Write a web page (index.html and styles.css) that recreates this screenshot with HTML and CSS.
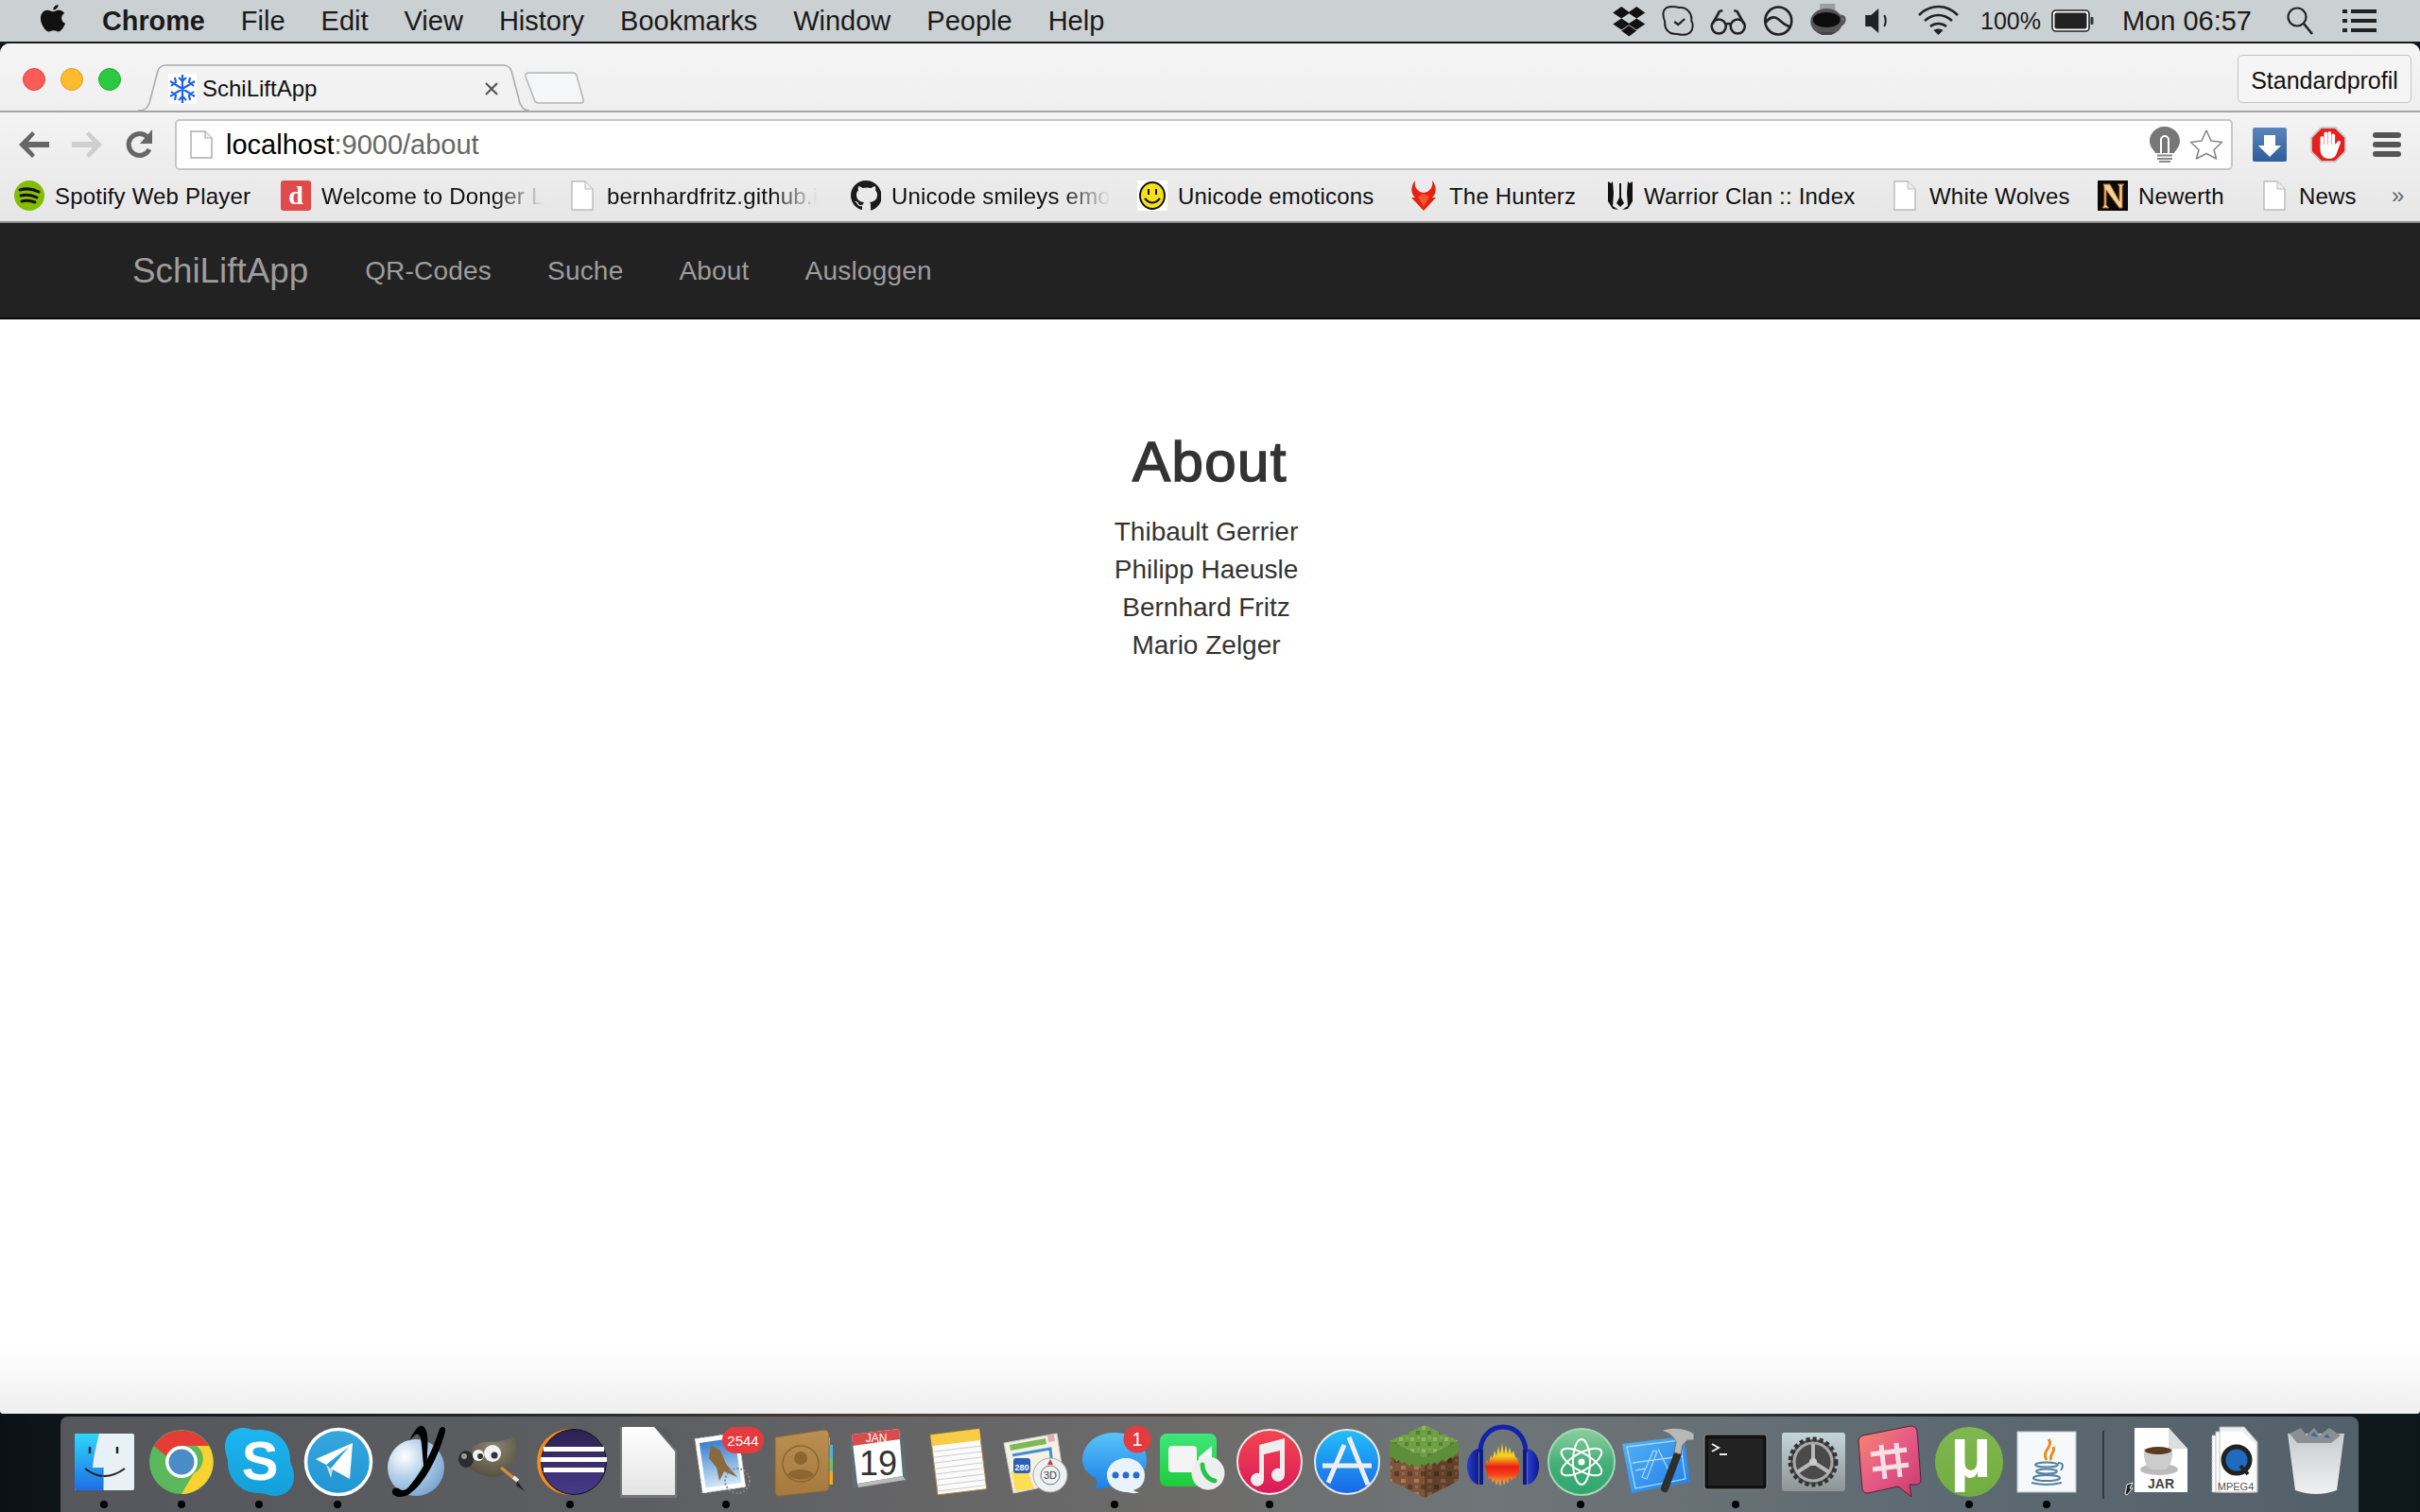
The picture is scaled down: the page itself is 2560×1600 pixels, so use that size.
FILE: index.html
```html
<!DOCTYPE html>
<html lang="en">
<head>
<meta charset="utf-8">
<title>SchiLiftApp</title>
<link rel="stylesheet" href="styles.css">
</head>
<body>
<svg class="defs" aria-hidden="true"><defs>
<linearGradient id="gFinder" x1="0" y1="0" x2="0" y2="1"><stop offset="0" stop-color="#2fd6fc"/><stop offset="1" stop-color="#1d6fe6"/></linearGradient>
<linearGradient id="gSky" x1="0" y1="0" x2="0" y2="1"><stop offset="0" stop-color="#1db6f2"/><stop offset="1" stop-color="#159fd6"/></linearGradient>
<linearGradient id="gTele" x1="0" y1="0" x2="0" y2="1"><stop offset="0" stop-color="#37a6de"/><stop offset="1" stop-color="#1f96d2"/></linearGradient>
<radialGradient id="gVym" cx=".3" cy=".3" r=".85"><stop offset="0" stop-color="#fff"/><stop offset=".45" stop-color="#b4cfea"/><stop offset="1" stop-color="#6f9ecb"/></radialGradient>
<radialGradient id="gGimp" cx=".5" cy=".3" r=".8"><stop offset="0" stop-color="#8c8570"/><stop offset="1" stop-color="#4f4a3c"/></radialGradient>
<linearGradient id="gEclipse" x1="0" y1="0" x2="0" y2="1"><stop offset="0" stop-color="#2c2150"/><stop offset="1" stop-color="#473a8c"/></linearGradient>
<linearGradient id="gDoc" x1="0" y1="0" x2="0" y2="1"><stop offset="0" stop-color="#fff"/><stop offset="1" stop-color="#e4e4e4"/></linearGradient>
<linearGradient id="gMail" x1="0" y1="0" x2="0" y2="1"><stop offset="0" stop-color="#3a7fd0"/><stop offset="1" stop-color="#cfe6f6"/></linearGradient>
<linearGradient id="gBook" x1="0" y1="0" x2="0" y2="1"><stop offset="0" stop-color="#b98f52"/><stop offset="1" stop-color="#a67a3e"/></linearGradient>
<linearGradient id="gMsg" x1="0" y1="0" x2="0" y2="1"><stop offset="0" stop-color="#5ac4fa"/><stop offset="1" stop-color="#1a7fe6"/></linearGradient>
<linearGradient id="gFace" x1="0" y1="0" x2="0" y2="1"><stop offset="0" stop-color="#3fe67c"/><stop offset="1" stop-color="#1fcc3a"/></linearGradient>
<linearGradient id="gTunes" x1="0" y1="0" x2="0" y2="1"><stop offset="0" stop-color="#f6454f"/><stop offset="1" stop-color="#d91a5a"/></linearGradient>
<linearGradient id="gStore" x1="0" y1="0" x2="0" y2="1"><stop offset="0" stop-color="#22c0fa"/><stop offset="1" stop-color="#1a66e6"/></linearGradient>
<linearGradient id="gAud" x1="0" y1="0" x2="0" y2="1"><stop offset="0" stop-color="#e8c83a"/><stop offset=".3" stop-color="#f4d21e"/><stop offset=".55" stop-color="#ee1c14"/><stop offset=".72" stop-color="#f4421a"/><stop offset="1" stop-color="#e8cf4a"/></linearGradient>
<linearGradient id="gAudB" x1="0" y1="0" x2="1" y2="0"><stop offset="0" stop-color="#2a3cd0"/><stop offset="1" stop-color="#0c1a8a"/></linearGradient>
<linearGradient id="gAtom" x1="0" y1="0" x2="0" y2="1"><stop offset="0" stop-color="#8ccf9f"/><stop offset=".55" stop-color="#44ad78"/><stop offset="1" stop-color="#2fa670"/></linearGradient>
<linearGradient id="gXcode" x1="0" y1="0" x2="1" y2="1"><stop offset="0" stop-color="#55b4f5"/><stop offset="1" stop-color="#1f7de8"/></linearGradient>
<linearGradient id="gPref" x1="0" y1="0" x2="0" y2="1"><stop offset="0" stop-color="#c4d6dc"/><stop offset="1" stop-color="#8f9496"/></linearGradient>
<linearGradient id="gPink" x1="0" y1="0" x2="1" y2="1"><stop offset="0" stop-color="#f58a6e"/><stop offset=".5" stop-color="#e65a86"/><stop offset="1" stop-color="#c73b6d"/></linearGradient>
<linearGradient id="gTrash" x1="0" y1="0" x2="0" y2="1"><stop offset="0" stop-color="#c8cccf"/><stop offset="1" stop-color="#f0f0f0"/></linearGradient>
<linearGradient id="gGrn" x1="0" y1="0" x2="0" y2="1"><stop offset="0" stop-color="#7fb84e"/><stop offset="1" stop-color="#72ad42"/></linearGradient>
<linearGradient id="gDown" x1="0" y1="0" x2="0" y2="1"><stop offset="0" stop-color="#5b86bb"/><stop offset="1" stop-color="#2f5c9b"/></linearGradient>
<pattern id="pGrass" width="12" height="12" patternUnits="userSpaceOnUse"><rect width="12" height="12" fill="#6f9f45"/><rect width="4" height="4" x="1" y="2" fill="#8cb860"/><rect width="4" height="4" x="7" y="7" fill="#557f35"/><rect width="3" height="3" x="8" y="1" fill="#7eaa52"/></pattern>
<pattern id="pDirtL" width="14" height="14" patternUnits="userSpaceOnUse"><rect width="14" height="14" fill="#7d5438"/><rect width="5" height="4" x="1" y="2" fill="#a87b56"/><rect width="5" height="5" x="8" y="8" fill="#5d3c27"/><rect width="3" height="3" x="2" y="9" fill="#92684a"/></pattern>
<pattern id="pDirtR" width="14" height="14" patternUnits="userSpaceOnUse"><rect width="14" height="14" fill="#61402a"/><rect width="5" height="4" x="1" y="2" fill="#83593c"/><rect width="5" height="5" x="8" y="8" fill="#472d1c"/><rect width="3" height="3" x="2" y="9" fill="#72503a"/></pattern>
</defs></svg>

<header class="menubar">
  <div class="menu-left">
    <svg class="apple" viewBox="0 0 30 34"><path fill="#111" d="M21 1c.2 3-2.600 6-5.600 5.800C15 4 18 1.200 21 1zM15.500 8.600c1.400 0 3.300-1.700 6-1.500 1.400 0 4.600.5 6.500 3.400-4.800 3-4 9.500 1 11.600-1.300 3.400-4.500 9.400-7.800 9.400-2 0-3-1.300-5.400-1.300s-3.500 1.300-5.400 1.300C6.600 31.500 1 23 1 16.500c0-6 4-9.300 7.500-9.400 2.800 0 4.800 1.500 7 1.500z"/></svg>
    <span class="menu-item menu-strong">Chrome</span>
    <span class="menu-item">File</span>
    <span class="menu-item">Edit</span>
    <span class="menu-item">View</span>
    <span class="menu-item">History</span>
    <span class="menu-item">Bookmarks</span>
    <span class="menu-item">Window</span>
    <span class="menu-item">People</span>
    <span class="menu-item">Help</span>
  </div>
  <div class="menu-right">
    <svg class="mi" viewBox="0 0 52 44"><path fill="#111" d="M18 7l9 6.500-9 6-9-6zM34 7l9 6.500-9 6-9-6zM18 19.500l9 6-9 6-9-6zM34 19.500l9 6-9 6-9-6zM26 27l8 5.500-8 6-8-6z"/></svg>
    <svg class="mi" viewBox="0 0 52 44"><path fill="none" stroke="#222" stroke-width="2" d="M13 8c5-2 9-1 13 0 8-1 14 6 13 14 2 3 2 9-1 12-4 4-10 3-14 2-8 1-14-5-13-13-2-5-3-12 2-15z"/><path fill="none" stroke="#222" stroke-width="2.200" d="M21 23l4 3 7-6"/></svg>
    <svg class="mi" viewBox="0 0 52 44"><g fill="none" stroke="#222" stroke-width="2.600"><circle cx="16" cy="28" r="7.500"/><circle cx="36" cy="28" r="7.500"/><path d="M23 26q3-2 6 0M9.500 25L17 11.500M42.500 25L35 11.500M17 11.500h3M35 11.500h-3"/></g></svg>
    <svg class="mi" viewBox="0 0 52 44"><g fill="none" stroke="#222" stroke-width="2.600"><ellipse cx="26" cy="22" rx="14" ry="14.500"/><path d="M12.500 24c4-6 9-7 13-4s8 8 13 8"/></g></svg>
    <svg class="mi" viewBox="0 0 52 44"><path fill="#777" opacity=".55" d="M18 4h16v7H18z"/><ellipse cx="25" cy="23" rx="17" ry="14" fill="#555"/><path fill="none" stroke="#555" stroke-width="3" d="M40 17c6 0 5 9-3 10"/><ellipse cx="25" cy="21" rx="14.500" ry="8" fill="#0c0c0c"/><path fill="#444" d="M15 34h20l-5 3H20z"/></svg>
    <svg class="mi" viewBox="0 0 52 44"><path fill="#1c2226" d="M13 16h6l8-7v26l-8-7h-6z"/><path fill="none" stroke="#1c2226" stroke-width="2" d="M33 16q3 6 0 12"/></svg>
    <svg class="mi-w" viewBox="0 0 77 44"><g fill="none" stroke="#222" stroke-width="2.600"><path d="M18 16c12-12 29-12 41 0M24 22c9-8 20-8 29 0M30 28c5-4 12-4 17 0"/></g><path fill="#222" d="M38.500 37l-5-5c3-2 7-2 10 0z"/></svg>
    <span class="menu-pct">100%</span>
    <svg class="batt" viewBox="0 0 46 28"><rect x="1" y="3" width="39" height="22" rx="4" fill="#fff" stroke="#222" stroke-width="1.600"/><rect x="3.500" y="5.500" width="34" height="17" rx="2" fill="#222"/><rect x="41.500" y="10" width="3" height="8" rx="1" fill="#333"/></svg>
    <span class="menu-clock">Mon 06:57</span>
    <svg class="msearch" viewBox="0 0 30 32"><circle cx="12" cy="12" r="9.500" fill="none" stroke="#222" stroke-width="2.200"/><path d="M19 19l9 11" stroke="#222" stroke-width="2.600"/></svg>
    <svg class="mlist" viewBox="0 0 36 26"><path fill="#222" d="M0 1h5v4H0zM9 1h27v4H9zM0 11h5v4H0zM9 11h27v4H9zM0 21h5v4H0zM9 21h27v4H9z"/></svg>
  </div>
</header>

<main class="window">
  <div class="tabstrip">
    <div class="lights"><i class="light red"></i><i class="light amber"></i><i class="light green"></i></div>
    <div class="tab">
      <svg class="tab-shape" viewBox="0 0 414 50" preserveAspectRatio="none"><path fill="#f2f2f2" stroke="#a9a9a9" stroke-width="1.500" d="M0 49c7 0 10-2 12-8l9-34q2-6 9-6h356q7 0 9 6l9 34c2 6 6 8 10 8"/></svg>
      <svg class="favicon" viewBox="0 0 30 32"><rect width="30" height="32" fill="#fff"/><g stroke="#1f63e6" stroke-width="2.200" fill="none"><path d="M15 1v30M2 8l26 16M28 8L2 24M11 4l4 4 4-4M11 28l4-4 4 4M3 13l5-4-1-5M27 13l-5-4 1-5M3 19l5 4-1 5M27 19l-5 4 1 5"/></g></svg>
      <span class="tab-title">SchiLiftApp</span>
      <svg class="tab-close" viewBox="0 0 16 16"><path d="M2 2l12 12M14 2L2 14" stroke="#555" stroke-width="2.200"/></svg>
    </div>
    <svg class="newtab" viewBox="0 0 64 34"><path fill="#f4f6f7" stroke="#b4b4b4" stroke-width="1.500" d="M6 1h46q3 0 4 3l7 25q1 4-3 4H16q-4 0-5-4L2 5q-1-4 4-4z"/></svg>
    <div class="profile">Standardprofil</div>
  </div>

  <div class="chrome-lower">
    <div class="toolbar">
      <svg class="tool" viewBox="0 0 40 40"><path fill="#666" d="M4 20L18 6l3 3-7 8h22v6H14l7 8-3 3z"/></svg>
      <svg class="tool" viewBox="0 0 40 40"><path fill="#cfcfcf" d="M36 20L22 6l-3 3 7 8H4v6h22l-7 8 3 3z"/></svg>
      <svg class="tool" viewBox="0 0 40 40"><path fill="none" stroke="#666" stroke-width="5" d="M30 25a11.500 11.500 0 1 1-2-13"/><path fill="#666" d="M33 4v15H20z"/></svg>
      <div class="omnibox">
        <svg class="omni-file" viewBox="0 0 24 30"><path fill="#fff" stroke="#aaa" stroke-width="1.400" d="M1 1h15l7 7v21H1z"/><path fill="#eee" stroke="#aaa" stroke-width="1.200" d="M16 1v7h7"/></svg>
        <span class="omni-url"><span class="omni-host">localhost</span>:9000/about</span>
        <svg class="omni-bulb" viewBox="0 0 32 38"><path fill="#777" d="M16 0c9 0 16 7 16 15 0 7-5 10-6 13H6C5 25 0 22 0 15 0 7 7 0 16 0z"/><path fill="none" stroke="#fff" stroke-width="2" d="M12 28V14a4 4 0 0 1 8 0v14"/><path fill="#888" d="M8 29.500h16v2H8zM8 33h16v2H8zM10 36h12v2H10z"/></svg>
        <svg class="omni-star" viewBox="0 0 36 34"><path fill="#fff" stroke="#888" stroke-width="1.600" stroke-linejoin="round" d="M18 2l5 11 11.500 1.500-8.500 8 2.500 9.500-10.500-5.500L7.500 32 10 22.500l-8.500-8L13 13z"/></svg>
      </div>
      <svg class="ext ext-first" viewBox="0 0 40 40"><rect x="2" y="2" width="36" height="36" rx="2" fill="url(#gDown)"/><path fill="#fff" d="M14 10h12v11h6L20 33 8 21h6z"/></svg>
      <svg class="ext" viewBox="0 0 40 40"><path fill="#e4211f" stroke="#c8c8c8" stroke-width="1.800" d="M12.500 2h15L38 12.500v15L27.500 38h-15L2 27.500v-15z"/><g fill="#fff"><rect x="11.500" y="11" width="3.600" height="14" rx="1.800"/><rect x="15.500" y="6.500" width="3.600" height="16" rx="1.800"/><rect x="19.500" y="6" width="3.600" height="16" rx="1.800"/><rect x="23.500" y="8.500" width="3.600" height="14" rx="1.800"/><path d="M11.500 20h15.600l3.500-4c2-.5 3 1 2 3l-3 8c-1 5-4 8-9 8s-9-4-9-9z"/></g></svg>
      <svg class="ext" viewBox="0 0 40 40"><g fill="#555"><rect x="5" y="7" width="30" height="6" rx="3"/><rect x="5" y="17" width="30" height="6" rx="3"/><rect x="5" y="27" width="30" height="6" rx="3"/></g></svg>
    </div>
    <div class="bookmarks">
      <div class="bm"><svg class="bm-i" viewBox="0 0 32 32"><circle cx="16" cy="16" r="16" fill="#84bd00"/><g fill="none" stroke="#111" stroke-width="3" stroke-linecap="round"><path d="M6 10q10-3 20 2M7 16q9-2 17 2M8 22q7-2 14 1"/></g></svg><span class="bm-t">Spotify Web Player</span></div>
      <div class="bm"><svg class="bm-i" viewBox="0 0 32 32"><rect width="32" height="32" rx="3" fill="#e04a4a"/><text x="16" y="25" class="i-d">d</text></svg><span class="bm-t bm-fade">Welcome to Donger L</span></div>
      <div class="bm"><svg class="bm-f" viewBox="0 0 28 32"><path fill="#fff" stroke="#bbb" stroke-width="1.400" d="M2 1h14l8 8v22H2z"/><path fill="#eee" stroke="#bbb" d="M16 1v8h8"/></svg><span class="bm-t bm-fade">bernhardfritz.github.i</span></div>
      <div class="bm"><svg class="bm-i" viewBox="0 0 32 32"><path fill="#1b1b1b" d="M16 0C7 0 0 7 0 16c0 7 5 13 11 15 1 0 1-.5 1-1v-3c-4 1-5-2-5-2-1-2-2-2-2-2-1-1 0-1 0-1 2 0 3 2 3 2 1 3 4 2 5 1.500 0-1 .5-2 1-2.500-4-.5-8-2-8-8 0-2 .5-3 2-4.500 0-.5-.8-2 .2-4.200 0 0 1.300-.4 4.300 1.700 1.500-.4 3-.6 4.500-.6s3 .2 4.500.6c3-2 4.300-1.700 4.300-1.700 1 2.200.2 3.700.2 4.200 1.500 1.500 2 2.500 2 4.500 0 6-4 7.500-8 8 .6.6 1 1.500 1 3v4.500c0 .5 0 1 1 1 6-2 11-8 11-15C32 7 25 0 16 0z"/></svg><span class="bm-t bm-fade">Unicode smileys emo</span></div>
      <div class="bm"><svg class="bm-i" viewBox="0 0 32 32"><rect width="32" height="32" fill="#fff"/><ellipse cx="16" cy="16" rx="13" ry="14" fill="#f5e11a" stroke="#111" stroke-width="2"/><path d="M12 9v6M20 9v6" stroke="#111" stroke-width="2"/><path d="M8 19q8 9 16 0" fill="none" stroke="#111" stroke-width="2"/></svg><span class="bm-t">Unicode emoticons</span></div>
      <div class="bm"><svg class="bm-i" viewBox="0 0 32 32"><path fill="#e5210f" d="M7 0c-1 6 1 9 5 12l4 1 4-1c4-3 6-6 5-12 5 6 5 14 0 18h4L16 32 3 18h4C2 14 2 6 7 0z"/><path fill="#f9562f" d="M16 14l6 3-6 11-6-11z"/></svg><span class="bm-t">The Hunterz</span></div>
      <div class="bm"><svg class="bm-f" viewBox="0 0 28 32"><g fill="#111"><path d="M1 1l3 2 2-2 1 12-1 14 6 4-6-1-5-8zM27 1l-3 2-2-2-1 12 1 14-6 4 6-1 5-8z"/><path d="M13 3h2v15l3 6-4 4-4-4 3-6z"/></g></svg><span class="bm-t">Warrior Clan :: Index</span></div>
      <div class="bm"><svg class="bm-f" viewBox="0 0 28 32"><path fill="#fff" stroke="#bbb" stroke-width="1.400" d="M2 1h14l8 8v22H2z"/><path fill="#eee" stroke="#bbb" d="M16 1v8h8"/></svg><span class="bm-t">White Wolves</span></div>
      <div class="bm"><svg class="bm-i" viewBox="0 0 32 32"><rect width="32" height="32" fill="#0c0a08"/><path fill="#f1d29a" stroke="#b5651d" d="M6 4h7l10 18V6l-2-2h7l-2 2v23h-3L9 10v16l3 3H5l2-3V7z"/></svg><span class="bm-t">Newerth</span></div>
      <div class="bm"><svg class="bm-f" viewBox="0 0 28 32"><path fill="#fff" stroke="#bbb" stroke-width="1.400" d="M2 1h14l8 8v22H2z"/><path fill="#eee" stroke="#bbb" d="M16 1v8h8"/></svg><span class="bm-t">News</span></div>
      <div class="bm-more">»</div>
    </div>
  </div>

  <nav class="navbar">
    <a class="brand">SchiLiftApp</a>
    <a class="nav-link">QR-Codes</a>
    <a class="nav-link">Suche</a>
    <a class="nav-link">About</a>
    <a class="nav-link">Ausloggen</a>
  </nav>

  <section class="content">
    <h2 class="title">About</h2>
    <p class="names">Thibault Gerrier<br>Philipp Haeusle<br>Bernhard Fritz<br>Mario Zelger</p>
  </section>
</main>

<footer class="desktop">
  <div class="dock">
    <div class="di on"><svg viewBox="0 0 80 80"><rect x="9" y="10" width="63" height="60" rx="2" fill="#e8f0f8"/><path fill="url(#gFinder)" d="M11 10h24c-3 12-6 24-7 36h11v24H11a2 2 0 0 1-2-2V12a2 2 0 0 1 2-2z"/><path d="M25 24v7M54 24v7" stroke="#222" stroke-width="2.500"/><path d="M20 47q20 16 42 0" fill="none" stroke="#222" stroke-width="2"/><path d="M39 46v24" stroke="#2a6ad0" stroke-width="1"/></svg><i class="dot"></i></div>
    <div class="di on"><svg viewBox="0 0 80 80"><circle cx="40" cy="40" r="34" fill="#5cb85c"/><path fill="#e53d35" d="M11 23a34 34 0 0 1 58 0H40a17 17 0 0 0-16 11z"/><path fill="#f9d232" d="M69 23a34 34 0 0 1-29 51l13-22a17 17 0 0 0 3-29z"/><circle cx="40" cy="40" r="17" fill="#fff"/><circle cx="40" cy="40" r="13.500" fill="#4a8cc6"/></svg><i class="dot"></i></div>
    <div class="di on"><svg viewBox="0 0 80 80"><path fill="url(#gSky)" d="M24 4c5 0 8 3 15 2 20-1 34 13 34 32 0 5 4 9 4 17 0 13-8 21-21 21-6 0-9-3-16-3C21 73 7 59 7 40c0-5-3-9-3-17C4 12 12 4 24 4z"/><text x="41" y="59" class="i-s">S</text></svg><i class="dot"></i></div>
    <div class="di on"><svg viewBox="0 0 80 80"><circle cx="41" cy="40" r="34.500" fill="url(#gTele)" stroke="#fff" stroke-width="3.500"/><path fill="#fff" d="M56 20L17 37l11 6 24-19-19 23 20 11z"/><path fill="#cfe0ee" d="M28 43l5 14 2-9-2-1z"/></svg><i class="dot"></i></div>
    <div class="di"><svg viewBox="0 0 80 80"><circle cx="41" cy="46" r="30" fill="url(#gVym)"/><path fill="#000" d="M34 18C38 8 44 0 48 2c6 3 6 16 5 28 0 8-1 14-3 20-2-10-2-25-4-35-2-7-6-5-12 3z"/><path fill="#000" d="M66 5c4-4 7-1 6 3-6 22-20 54-38 66-6 4-16 4-18-1-1-5 4-7 8-4 3 2 6 1 9-2C48 50 60 25 66 5z"/></svg></div>
    <div class="di"><svg viewBox="0 0 80 80"><path fill="url(#gGimp)" d="M19 24c6-4 14-6 24-5 8-1 16-3 21-8 3 14 1 28-8 39-6 5-14 7-22 5-8-1-14-5-18-9z"/><ellipse cx="12" cy="37" rx="8" ry="9" fill="#2c2c2c"/><ellipse cx="10" cy="34" rx="3" ry="3" fill="#999"/><circle cx="25" cy="33" r="6" fill="#f2f2f2"/><circle cx="40" cy="31" r="9" fill="#f2f2f2"/><circle cx="27" cy="34" r="3" fill="#333"/><circle cx="42" cy="33" r="3.500" fill="#333"/><path d="M49 46l17 14" stroke="#d98b3c" stroke-width="3.500"/><path d="M62 56l5 4" stroke="#eee" stroke-width="4"/><path d="M66 60l8 11-9-6z" fill="#222"/></svg></div>
    <div class="di on"><svg viewBox="0 0 80 80"><circle cx="40" cy="40" r="35" fill="#f28b1e"/><circle cx="44" cy="40" r="34.500" fill="url(#gEclipse)" stroke="#111"/><path fill="#fff" d="M12 24h64v5H12zM9 35h70v5H9zM12 46h64v5H12z"/></svg><i class="dot"></i></div>
    <div class="di"><svg viewBox="0 0 80 80"><path fill="#777" d="M11 3h37l23 24v51H11z"/><path fill="url(#gDoc)" d="M13 3h34l22 26v46H13z"/><path fill="#555" opacity=".4" d="M47 3h14l10 24h-2z"/></svg></div>
    <div class="di on"><svg viewBox="0 0 80 80"><rect x="11" y="12" width="46" height="58" transform="rotate(-8 34 41)" fill="#fff" stroke="#ccc" stroke-dasharray="3 2"/><rect x="15" y="17" width="38" height="48" transform="rotate(-8 34 41)" fill="url(#gMail)"/><path fill="#8a6a3c" d="M24 22l10 6 6 14 12 14-14-6-5 10-3-14-8-10z"/><circle cx="52" cy="60" r="13" fill="none" stroke="#888" stroke-dasharray="2 2" stroke-width="2"/><rect x="36" y="3" width="44" height="28" rx="14" fill="#e53a3e"/><text x="58" y="23" class="i-b">2544</text></svg><i class="dot"></i></div>
    <div class="di"><svg viewBox="0 0 80 80"><path fill="#e5e5e5" d="M60 14h8v50h-8z"/><path fill="#48b4e0" d="M66 22h5v14h-5z"/><path fill="#6fc06a" d="M66 36h5v14h-5z"/><path fill="#f5a623" d="M66 50h5v14h-5z"/><path fill="url(#gBook)" stroke="#8c6630" d="M10 14l52-8c3 0 5 3 5 6v54c0 3-2 5-5 5l-48 5c-3 0-4-2-4-5z"/><circle cx="37" cy="42" r="19" fill="none" stroke="#8c6630" stroke-width="1.500"/><circle cx="37" cy="36" r="7" fill="#8c6630"/><path fill="#8c6630" d="M23 54c2-8 24-8 28 0-8 6-20 6-28 0z"/></svg></div>
    <div class="di"><svg viewBox="0 0 80 80"><path fill="#5d6d76" d="M6 11l56-4 6 52-58 9z"/><path fill="#fff" d="M9 11l50-6 4 50-48 8z"/><path fill="#d94c4c" d="M9 11l50-6 1 11-50 7z"/><path fill="#bbb" d="M15 63l48-8 3 4-50 8z"/><text x="35" y="19" class="i-jan">JAN</text><text x="37" y="54" class="i-19">19</text></svg></div>
    <div class="di"><svg viewBox="0 0 80 80"><g transform="rotate(-7 40 40)"><rect x="14" y="8" width="52" height="64" fill="#fbfbfb" stroke="#a68a3c"/><rect x="14" y="8" width="52" height="12" fill="#f7cd45"/><path stroke="#ccc" d="M14 26h52M14 32h52M14 38h52M14 44h52M14 50h52M14 56h52M14 62h52M14 68h52"/></g></svg></div>
    <div class="di"><svg viewBox="0 0 80 80"><path fill="#f5f1e3" stroke="#ccc" d="M6 20l56-10 8 52-54 11z"/><path fill="#7fb858" d="M12 22l38-7 1 6-38 7z"/><path fill="#e8a8b8" d="M52 12l7-1 1 7-7 1z"/><path fill="#ffdd55" d="M14 50l16-4 8 22-20 3z"/><path fill="none" stroke="#3f8ed6" stroke-width="3" d="M15 33l40-7 3 28"/><rect x="16" y="36" width="18" height="16" rx="3" fill="#2b60b8"/><text x="25" y="49" class="i-280">280</text><circle cx="55" cy="54" r="18" fill="#eef1f2" stroke="#aaa"/><circle cx="55" cy="54" r="10" fill="none" stroke="#777"/><path fill="#d33" d="M55 37l3 6h-6z"/><text x="55" y="58" class="i-3d">3D</text></svg></div>
    <div class="di on"><svg viewBox="0 0 80 80"><path fill="url(#gMsg)" d="M6 38C6 22 20 9 40 9s34 13 34 29c0 17-15 30-32 28-5 0-9 0-13 1-4 2-7 2-10 1 3-3 3-7 1-11C12 53 6 47 6 38z"/><path fill="#eaf3fb" d="M32 54c0-10 9-18 20-18s20 8 20 18c0 9-5 14-12 16 1 1 4 2 6 2-4 2-9 1-12 0-12 0-22-7-22-18z"/><circle cx="41" cy="54" r="3.500" fill="#2a6ad0"/><circle cx="52" cy="54" r="3.500" fill="#2a6ad0"/><circle cx="63" cy="54" r="3.500" fill="#2a6ad0"/><circle cx="64" cy="16" r="14.500" fill="#e53a3e"/><text x="64" y="23" class="i-b1">1</text></svg><i class="dot"></i></div>
    <div class="di"><svg viewBox="0 0 80 80"><rect x="6" y="10" width="60" height="56" rx="7" fill="url(#gFace)"/><rect x="15" y="23" width="30" height="28" rx="4" fill="#f4f4f4"/><path fill="#f4f4f4" d="M47 35l14-12v28l-14-9z"/><circle cx="57" cy="52" r="17.500" fill="#eee"/><path fill="none" stroke="#25c44a" stroke-width="5" stroke-linecap="round" d="M51 43c0 8 6 16 13 17"/></svg></div>
    <div class="di on"><svg viewBox="0 0 80 80"><circle cx="40" cy="40" r="34" fill="url(#gTunes)" stroke="#e8e8e8" stroke-width="2"/><path fill="#eee" d="M29 22l27-7v39a7 7 0 1 1-5-7V28l-17 4v27a7 7 0 1 1-5-7z"/></svg><i class="dot"></i></div>
    <div class="di"><svg viewBox="0 0 80 80"><circle cx="40" cy="40" r="34" fill="url(#gStore)" stroke="#e8e8e8" stroke-width="2"/><g stroke="#eee" stroke-width="5" fill="none"><path d="M42 14l20 50M37 22L20 62"/></g><path stroke="#eee" stroke-width="5" d="M14 44h52"/></svg></div>
    <div class="di"><svg viewBox="0 0 80 80"><path fill="url(#pGrass)" d="M40 1l36 17-36 18L3 18z"/><path fill="url(#pDirtL)" d="M3 18l37 18v42L4 60z"/><path fill="url(#pDirtR)" d="M76 18L40 36v42l36-18z"/><path fill="#5d8f3a" d="M3 18l37 18v8l-4-2v5l-5-4v3l-5-4-2 3-5-5-3 2-3-4-3 2-3-5-4 1zM76 18L40 36v8l5-3v4l6-5 2 3 6-6 3 3 5-5 3 1 6-7z"/></svg></div>
    <div class="di"><svg viewBox="0 0 80 80"><path fill="none" stroke="#1424a8" stroke-width="5" d="M17 30C17 -6 65 -6 65 30"/><path fill="url(#gAudB)" d="M15 26C6 28 2 38 3 47c1 9 6 16 12 17z"/><path fill="url(#gAudB)" d="M67 26c9 2 13 12 12 21-1 9-6 16-12 17z"/><path fill="#0c1a8a" d="M16 27h4v37h-4zM62 27h4v37h-4z"/><path fill="url(#gAud)" d="M22 44l2-6 2 3 2-8 2 3 2-8 2 6 2-11 2 9 2-12 2 12 2-10 2 10 2-8 2 8 2-4 2 7 2 1 2 6v10l-2 1-2 5-2-2-2 4-2-3-2 6-2-4-2 6-2-7-2 8-2-6-2 5-2-6-2 3-2-5-2 1z"/></svg></div>
    <div class="di on"><svg viewBox="0 0 80 80"><circle cx="41" cy="40" r="35" fill="url(#gAtom)" stroke="#a2d8b2" stroke-width="2"/><g fill="none" stroke="#fff" stroke-width="2"><ellipse cx="41" cy="40" rx="24" ry="9" transform="rotate(30 41 40)"/><ellipse cx="41" cy="40" rx="24" ry="9" transform="rotate(90 41 40)"/><ellipse cx="41" cy="40" rx="24" ry="9" transform="rotate(150 41 40)"/></g><circle cx="41" cy="40" r="3.500" fill="#fff"/></svg><i class="dot"></i></div>
    <div class="di"><svg viewBox="0 0 80 80"><path fill="url(#gXcode)" d="M2 21l65-8 7 48-62 12z"/><g fill="none" stroke="#a6d6f8" stroke-width="1.300"><path d="M7 24l56-7 6 41-53 10zM23 56l12-28 4 1-11 29zM40 26l13 27M13 41l52-7M16 49l10-2"/></g><path stroke="#2e2e2e" stroke-width="8" stroke-linecap="round" d="M61 31L47 68"/><path fill="#b8b8b8" stroke="#666" stroke-width=".8" d="M43 7c10-4 24-4 35 3v7h-7l-5 5-2 10-7-2 2-11c-3-7-8-10-16-12z"/></svg></div>
    <div class="di on"><svg viewBox="0 0 80 80"><rect x="7" y="11" width="66" height="58" rx="3" fill="#111" stroke="#888"/><rect x="11" y="15" width="58" height="50" fill="#222"/><path fill="none" stroke="#eee" stroke-width="2" d="M15 21l7 4-7 4"/><path stroke="#eee" stroke-width="2" d="M23 32h8"/></svg><i class="dot"></i></div>
    <div class="di"><svg viewBox="0 0 80 80"><rect x="7" y="9" width="67" height="62" rx="3" fill="url(#gPref)"/><circle cx="40" cy="40" r="24" fill="#555" stroke="#333" stroke-width="5" stroke-dasharray="4 3"/><circle cx="40" cy="40" r="20" fill="#4a4a4a" stroke="#aaa" stroke-width="3"/><path stroke="#b8b8b8" stroke-width="4" d="M40 40V21M40 40l-17 11M40 40l17 11"/><circle cx="40" cy="40" r="4" fill="#ccc"/></svg></div>
    <div class="di"><svg viewBox="0 0 80 80"><path fill="url(#gPink)" stroke="#5a1f3a" d="M6 18c0-3 2-5 5-6l50-10c4 0 6 2 7 5l4 52c0 3-2 5-5 5l-7 0 2 13-14-11-32 7c-3 0-5-1-6-4z"/><path fill="none" stroke="#fff" opacity=".8" stroke-width="5" d="M30 22l4 36M46 20l4 36M19 32l38-5M21 48l38-5"/></svg></div>
    <div class="di on"><svg viewBox="0 0 80 80"><ellipse cx="40" cy="40" rx="36" ry="37" fill="url(#gGrn)"/><text x="42" y="56" class="i-mu">µ</text></svg><i class="dot"></i></div>
    <div class="di on"><svg viewBox="0 0 80 80"><rect x="9" y="8" width="62" height="64" fill="#f6f9fb" stroke="#b8c4cc"/><path fill="none" stroke="#ea8a1f" stroke-width="3" d="M42 16c6 8-8 12-2 22M47 24c3 6-5 8-2 14"/><g fill="none" stroke="#5382a1" stroke-width="2"><ellipse cx="40" cy="43" rx="12" ry="2.500"/><ellipse cx="40" cy="50" rx="11" ry="2.500"/><ellipse cx="40" cy="57" rx="14" ry="3"/><path d="M24 62q16 4 32 0M52 41q8 0 3 8"/></g></svg><i class="dot"></i></div>
    <div class="dock-sep"><i class="sep-line"></i></div>
    <div class="di"><svg viewBox="0 0 80 80"><path fill="#fff" d="M12 4h36l20 22v46H12z"/><path fill="#ddd" d="M48 4l20 22H48z"/><ellipse cx="38" cy="48" rx="20" ry="6" fill="#bbb"/><path fill="#ccc" d="M22 26h30c1 10-2 20-8 22H30c-6-2-9-12-8-22z"/><ellipse cx="37" cy="28" rx="14" ry="4" fill="#5a3b20"/><text x="40" y="68" class="i-jar">JAR</text><path fill="#222" stroke="#eee" d="M2 74l2-10 6-2-3 6 3 0-6 7z"/></svg></div>
    <div class="di"><svg viewBox="0 0 80 80"><g fill="#fff" stroke="#bbb"><path d="M12 12h30l12 14v46H12z" stroke-dasharray="3 1"/><path d="M16 8h28l14 14v50H16z"/><path d="M20 3h26l14 16v53H20z" opacity=".9"/></g><circle cx="38" cy="38" r="14" fill="#1f6bc0" stroke="#222" stroke-width="5"/><path d="M42 44l8 9" stroke="#222" stroke-width="4"/><text x="37" y="70" class="i-mp">MPEG4</text></svg></div>
    <div class="di"><svg viewBox="0 0 80 80"><path fill="url(#gTrash)" d="M10 10h60l-8 60q-22 8-44 0z"/><path fill="#8b8f92" d="M12 10l12-6 6 8 8-8 6 8 10-8 12 8-10 8H20z"/><path fill="#3d6aa0" d="M34 12l4-4 4 6zM48 14l4-4 3 5z"/></svg></div>
  </div>
</footer>
</body>
</html>
```
FILE: styles.css
```css
* { box-sizing: border-box; }
html, body { margin: 0; height: 1600px; overflow: hidden; }
body {
  width: 2560px;
  display: flex;
  flex-direction: column;
  font-family: "Liberation Sans", Arial, sans-serif;
  color: #111;
  background: linear-gradient(90deg, #0b1217 0%, #1d2023 15%, #4a423a 40%, #3c3c39 60%, #1b2428 85%, #0d161b 100%);
}
.defs { display: block; width: 0; height: 0; }

/* menu bar */
.menubar {
  height: 46px;
  flex: none;
  display: flex;
  justify-content: space-between;
  align-items: flex-start;
  background: #cbd0d3;
  border-bottom: 2px solid #171c20;
}
.menu-left { display: flex; align-items: center; height: 44px; padding-left: 42px; }
.apple { width: 28px; height: 32px; margin-right: 38px; margin-top: -4px; flex: none; }
.menu-item { font-size: 29px; margin-right: 38px; color: #1a1a1a; line-height: 44px; }
.menu-strong { font-weight: 700; font-size: 28.8px; }
.menu-right { display: flex; align-items: center; height: 44px; padding-right: 46px; }
.mi { width: 52.5px; height: 44px; flex: none; }
.mi-w { width: 77px; height: 44px; flex: none; }
.menu-pct { font-size: 25px; margin-left: 6px; color: #1a1a1a; }
.batt { width: 46px; height: 28px; margin-left: 11px; flex: none; }
.menu-clock { font-size: 29px; margin-left: 29px; color: #1a1a1a; }
.msearch { width: 30px; height: 32px; margin-left: 36px; flex: none; }
.mlist { width: 36px; height: 26px; margin-left: 30px; flex: none; }

/* window */
.window {
  height: 1450px;
  flex: none;
  display: flex;
  flex-direction: column;
  border-radius: 10px 10px 4px 4px;
  overflow: hidden;
  background: #fff;
}
.tabstrip {
  height: 73px;
  flex: none;
  display: flex;
  align-items: flex-end;
  background: linear-gradient(#f5f5f5, #efefef);
  border-bottom: 2px solid #a4a4a4;
  position: relative;
}
.lights { display: flex; gap: 16px; padding-left: 24px; align-self: flex-start; padding-top: 26px; width: 146px; flex: none; }
.light { width: 24px; height: 24px; border-radius: 50%; display: block; flex: none; }
.red { background: #fc5b57; border: 1px solid #e2463f; }
.amber { background: #fdbb2f; border: 1px solid #e09e1e; }
.green { background: #2ac940; border: 1px solid #1dad2b; }
.tab {
  width: 414px;
  height: 50px;
  flex: none;
  display: flex;
  align-items: center;
  padding-left: 32px;
  position: relative;
  margin-bottom: -1px;
}
.tab-shape { position: absolute; left: 0; top: 0; width: 414px; height: 50px; }
.favicon { width: 30px; height: 32px; flex: none; position: relative; margin-top: 2px; }
.tab-title { font-size: 24px; margin-left: 6px; position: relative; width: 298px; margin-top: 2px; white-space: nowrap; }
.tab-close { width: 16px; height: 16px; position: relative; flex: none; margin-top: 2px; }
.newtab { width: 64px; height: 34px; flex: none; margin: 0 0 7px -6px; }
.profile {
  position: absolute;
  right: 9px;
  top: 12px;
  width: 184px;
  height: 51px;
  display: flex;
  align-items: center;
  justify-content: center;
  padding-top: 3px;
  font-size: 25px;
  border: 1px solid #c4c4c4;
  border-radius: 5px;
  background: #f5f5f5;
}
.chrome-lower {
  flex: none;
  background: linear-gradient(#f4f4f4, #e6e6e6);
  border-bottom: 2px solid #8f8f8f;
}
.toolbar {
  height: 64px;
  display: flex;
  align-items: center;
  gap: 16px;
  padding: 4px 15px 0 16px;
}
.tool { width: 40px; height: 40px; flex: none; }
.omnibox {
  flex: 1;
  height: 54px;
  margin-left: 1px;
  display: flex;
  align-items: center;
  background: #fff;
  border: 2px solid #c6c6c6;
  border-radius: 5px;
  padding: 0 8px 0 14px;
}
.omni-file { width: 24px; height: 30px; flex: none; }
.omni-url { font-size: 29px; color: #666; margin-left: 14px; flex: 1; white-space: nowrap; }
.omni-host { color: #000; }
.omni-bulb { width: 32px; height: 38px; flex: none; margin-right: 10px; }
.omni-star { width: 36px; height: 34px; flex: none; }
.ext { width: 40px; height: 40px; flex: none; margin-left: 6px; }
.ext-first { margin-left: 3px; }
.bookmarks {
  height: 51px;
  display: grid;
  grid-template-columns: 282px 306px 297px 303px 287px 210px 302px 217px 174px 137px 1fr;
  padding: 8px 0 0 15px;
  align-items: start;
}
.bm { display: flex; gap: 11px; height: 32px; align-items: center; min-width: 0; }
.bm-i { width: 32px; height: 32px; flex: none; }
.bm-f { width: 28px; height: 32px; flex: none; }
.bm-t { font-size: 24px; letter-spacing: .2px; white-space: nowrap; color: #111; margin-top: 2px; }
.bm-fade {
  -webkit-mask-image: linear-gradient(90deg, #000 78%, transparent 100%);
  mask-image: linear-gradient(90deg, #000 78%, transparent 100%);
}
.bm-more { font-size: 24px; color: #666; line-height: 32px; }

/* page */
.navbar {
  height: 102px;
  flex: none;
  display: flex;
  align-items: center;
  padding: 2px 0 0 140px;
  background: #222;
  border-bottom: 2px solid #080808;
}
.brand { font-size: 36.8px; color: #9d9d9d; margin-right: 60px; }
.nav-link { font-size: 28px; letter-spacing: .2px; color: #9d9d9d; margin-right: 59px; }
.content {
  flex: 1;
  text-align: center;
  color: #333;
  background: linear-gradient(#fff calc(100% - 70px), #efefef 100%);
}
.title {
  margin: 118px 0 0;
  font-size: 60px;
  line-height: 66px;
  font-weight: 400;
  letter-spacing: 1.4px;
  -webkit-text-stroke: 1.6px #333;
}
.names {
  margin: 21px 8px 0 0;
  font-size: 28px;
  line-height: 40px;
}

/* dock */
.desktop { flex: 1; padding: 3px 65px 0 64px; }
.dock {
  height: 101px;
  display: flex;
  padding: 8px 0 0 5px;
  border-radius: 8px 8px 0 0;
  background: linear-gradient(90deg, #55575c 0%, #5d5e61 25%, #6d6c6b 50%, #6f7578 62%, #5f6b72 80%, #52606a 100%);
}
.di { width: 82.2px; height: 93px; flex: none; display: flex; flex-direction: column; align-items: center; }
.di svg { width: 80px; height: 80px; flex: none; display: block; }
.dot { display: none; width: 8px; height: 8px; border-radius: 50%; background: #000; margin-top: 1px; }
.on .dot { display: block; }
.dock-sep { width: 39px; flex: none; display: flex; justify-content: center; padding-top: 7px; height: 79px; }
.sep-line { display: block; width: 2px; height: 72px; background: #2e3a42; }

/* svg text */
.i-d { font: 700 28px "Liberation Serif", serif; fill: #fff; text-anchor: middle; }
.i-s { font: 700 58px "Liberation Sans", sans-serif; fill: #fff; text-anchor: middle; }
.i-b { font: 400 15px "Liberation Sans", sans-serif; fill: #fff; text-anchor: middle; }
.i-b1 { font: 400 20px "Liberation Sans", sans-serif; fill: #fff; text-anchor: middle; }
.i-jan { font: 400 12px "Liberation Sans", sans-serif; fill: #fff; text-anchor: middle; }
.i-19 { font: 400 36px "Liberation Sans", sans-serif; fill: #333; text-anchor: middle; }
.i-280 { font: 700 9px "Liberation Sans", sans-serif; fill: #fff; text-anchor: middle; }
.i-3d { font: 400 11px "Liberation Sans", sans-serif; fill: #444; text-anchor: middle; }
.i-mu { font: 700 76px "Liberation Sans", sans-serif; fill: #fff; text-anchor: middle; }
.i-jar { font: 700 14px "Liberation Sans", sans-serif; fill: #444; text-anchor: middle; }
.i-mp { font: 400 11px "Liberation Sans", sans-serif; fill: #555; text-anchor: middle; }
```
